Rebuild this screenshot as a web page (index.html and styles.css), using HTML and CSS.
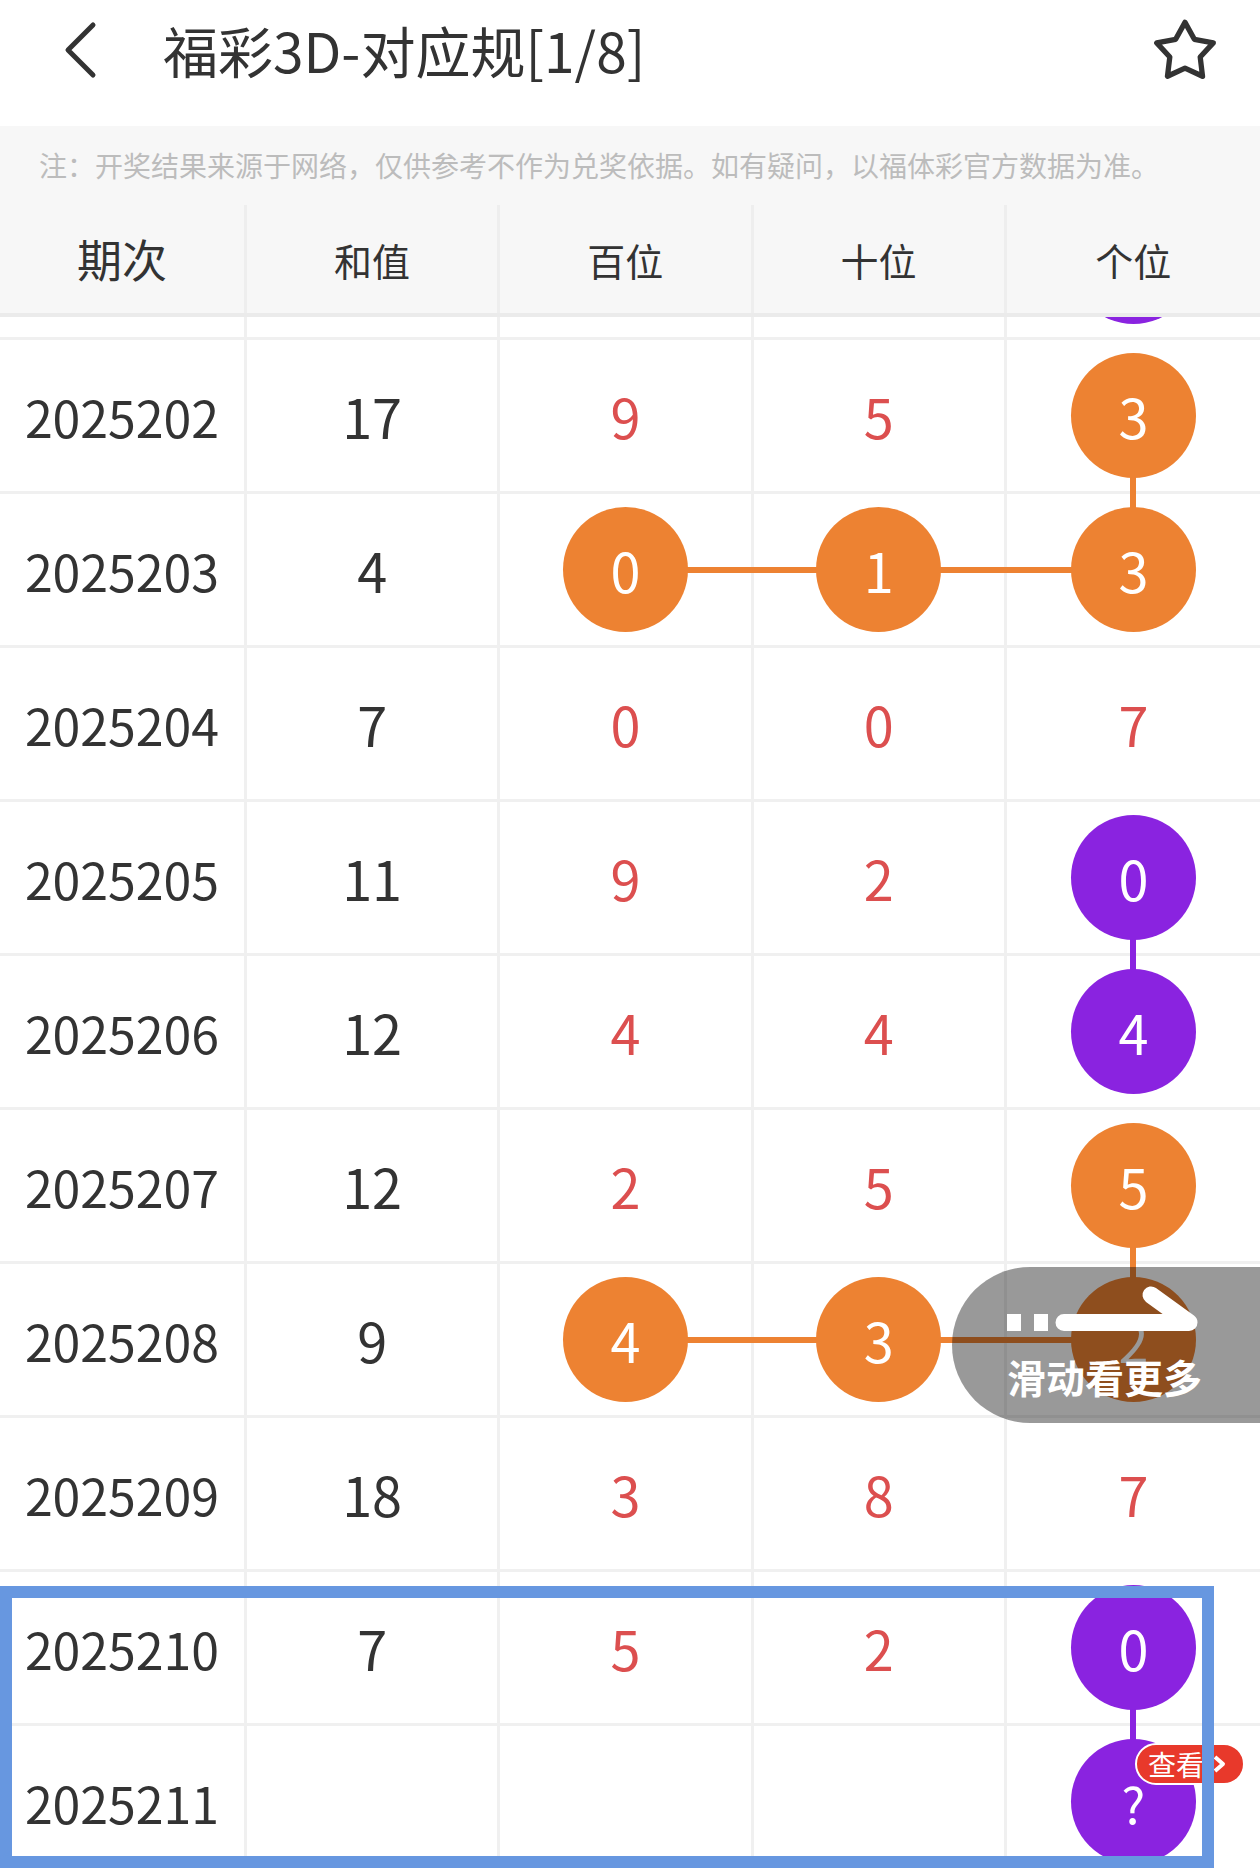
FILE: index.html
```html
<!DOCTYPE html>
<html lang="zh-CN">
<head>
    <meta charset="UTF-8">
    <meta name="viewport" content="width=device-width, initial-scale=1.0">
    <title>福彩3D-对应规</title>
    <link rel="stylesheet" href="styles.css">
</head>
<body>
    <div class="topbar">
        <a href="#" class="back-btn">
            <svg width="40" height="60" viewBox="0 0 40 60"><polyline points="33,5 8,30 33,55" fill="none" stroke="#333" stroke-width="5" stroke-linecap="round" stroke-linejoin="round"/></svg>
        </a>
        <h1 class="title">福彩3D-对应规[1/8]</h1>
        <a href="#" class="fav-btn">
            <svg width="68" height="68" viewBox="0 0 64 64"><polygon points="32,6 40.8,21.9 58.6,25.3 46.3,38.6 48.5,56.7 32,49 15.5,56.7 17.7,38.6 5.4,25.3 23.2,21.9" fill="none" stroke="#333" stroke-width="5" stroke-linejoin="round"/></svg>
        </a>
    </div>

    <div class="notice">注：开奖结果来源于网络，仅供参考不作为兑奖依据。如有疑问，以福体彩官方数据为准。</div>

    <div class="table-head">
        <div class="th th-issue">期次</div>
        <div class="th">和值</div>
        <div class="th">百位</div>
        <div class="th">十位</div>
        <div class="th">个位</div>
    </div>

    <div class="table-body">
        <div class="rows">
            <!-- 上一期已滚动到表头下，只露出底部 -->
            <div class="row">
                <div class="cell issue"></div>
                <div class="cell"></div>
                <div class="cell"></div>
                <div class="cell"></div>
                <div class="cell"><span class="ball purple"></span></div>
            </div>
            <div class="row">
                <div class="cell issue">2025202</div>
                <div class="cell">17</div>
                <div class="cell red">9</div>
                <div class="cell red">5</div>
                <div class="cell"><span class="ball orange">3</span></div>
            </div>
            <div class="row">
                <div class="cell issue">2025203</div>
                <div class="cell">4</div>
                <div class="cell"><span class="ball orange">0</span></div>
                <div class="cell"><i class="line line-left orange"></i><span class="ball orange">1</span></div>
                <div class="cell"><i class="line line-left orange"></i><i class="line line-up orange"></i><span class="ball orange">3</span></div>
            </div>
            <div class="row">
                <div class="cell issue">2025204</div>
                <div class="cell">7</div>
                <div class="cell red">0</div>
                <div class="cell red">0</div>
                <div class="cell red">7</div>
            </div>
            <div class="row">
                <div class="cell issue">2025205</div>
                <div class="cell">11</div>
                <div class="cell red">9</div>
                <div class="cell red">2</div>
                <div class="cell"><span class="ball purple">0</span></div>
            </div>
            <div class="row">
                <div class="cell issue">2025206</div>
                <div class="cell">12</div>
                <div class="cell red">4</div>
                <div class="cell red">4</div>
                <div class="cell"><i class="line line-up purple"></i><span class="ball purple">4</span></div>
            </div>
            <div class="row">
                <div class="cell issue">2025207</div>
                <div class="cell">12</div>
                <div class="cell red">2</div>
                <div class="cell red">5</div>
                <div class="cell"><span class="ball orange">5</span></div>
            </div>
            <div class="row">
                <div class="cell issue">2025208</div>
                <div class="cell">9</div>
                <div class="cell"><span class="ball orange">4</span></div>
                <div class="cell"><i class="line line-left orange"></i><span class="ball orange">3</span></div>
                <div class="cell"><i class="line line-left orange"></i><i class="line line-up orange"></i><span class="ball orange">2</span></div>
            </div>
            <div class="row">
                <div class="cell issue">2025209</div>
                <div class="cell">18</div>
                <div class="cell red">3</div>
                <div class="cell red">8</div>
                <div class="cell red">7</div>
            </div>
            <div class="row">
                <div class="cell issue">2025210</div>
                <div class="cell">7</div>
                <div class="cell red">5</div>
                <div class="cell red">2</div>
                <div class="cell"><span class="ball purple">0</span></div>
            </div>
            <div class="row">
                <div class="cell issue">2025211</div>
                <div class="cell"></div>
                <div class="cell"></div>
                <div class="cell"></div>
                <div class="cell"><i class="line line-up purple"></i><span class="ball purple ask">?</span></div>
            </div>
        </div>
    </div>

    <div class="swipe-tip">
        <svg width="200" height="56" viewBox="0 0 200 56">
            <rect x="8" y="35" width="14" height="17" fill="#fff"/>
            <rect x="35" y="35" width="14" height="17" fill="#fff"/>
            <path d="M65 43.5 H190 L152 16" fill="none" stroke="#fff" stroke-width="17" stroke-linecap="round" stroke-linejoin="round"/>
        </svg>
        <span>滑动看更多</span>
    </div>

    <a href="#" class="view-tag">查看<svg width="14" height="20" viewBox="0 0 14 20"><polyline points="3,3 11,10 3,17" fill="none" stroke="#fff" stroke-width="4" stroke-linejoin="round"/></svg></a>
    <div class="focus-box"></div>
</body>
</html>
```

FILE: styles.css
```css
* {
    margin: 0;
    padding: 0;
    box-sizing: border-box;
}
body {
    width: 1260px;
    height: 1868px;
    overflow: hidden;
    position: relative;
    background: #fff;
    font-family: "Noto Sans CJK SC", "Noto Sans", sans-serif;
    color: #333;
}
a {
    text-decoration: none;
    color: inherit;
}
.topbar {
    height: 126px;
    display: flex;
    align-items: flex-start;
    padding-top: 20px;
}
.back-btn {
    display: flex;
    margin-left: 60px;
    width: 40px;
    height: 60px;
}
.title {
    margin-left: 63px;
    font-size: 55px;
    font-weight: normal;
    line-height: 64px;
    margin-top: -3px;
    color: #333;
    flex: 1;
    white-space: nowrap;
}
.fav-btn {
    display: flex;
    margin-right: 41px;
    margin-top: -4px;
}
.notice {
    height: 79px;
    line-height: 79px;
    background: #f7f7f7;
    padding-left: 39px;
    font-size: 28px;
    color: #bcbcbc;
    white-space: nowrap;
}
.table-head {
    display: grid;
    grid-template-columns: 247px repeat(4, 1fr);
    height: 112px;
    background: #f7f7f7;
    border-bottom: 4px solid #ebebeb;
}
.th {
    display: flex;
    align-items: center;
    justify-content: center;
    font-size: 38px;
    line-height: 1.5;
    color: #333;
    border-right: 3px solid #eeeeee;
}
.th:last-child {
    border-right: none;
}
.th-issue {
    font-size: 45px;
}
.table-body {
    height: 1551px;
    overflow: hidden;
}
.rows {
    margin-top: -131px;
}
.row {
    display: grid;
    grid-template-columns: 247px repeat(4, 1fr);
    height: 154px;
    border-bottom: 3px solid #f0f0f0;
}
.cell {
    position: relative;
    display: flex;
    align-items: center;
    justify-content: center;
    font-size: 54px;
    color: #333;
    border-right: 3px solid #f0f0f0;
}
.cell:last-child {
    border-right: none;
}
.cell.issue {
    font-size: 50px;
}
.cell.red {
    color: #dc4f4f;
}
.ball {
    position: relative;
    z-index: 2;
    width: 125px;
    height: 125px;
    border-radius: 50%;
    display: flex;
    align-items: center;
    justify-content: center;
    color: #fff;
    font-size: 54px;
}
.ball.orange {
    background: #ed8232;
}
.ball.purple {
    background: #8a23e0;
}
.ball.ask {
    font-size: 50px;
}
.line {
    position: absolute;
    z-index: 1;
}
.line.orange {
    background: #ed8232;
}
.line.purple {
    background: #8a23e0;
}
.line-left {
    right: 50%;
    top: calc(50% - 3px);
    width: 254px;
    height: 6px;
}
.line-up {
    left: calc(50% - 3px);
    bottom: 50%;
    width: 6px;
    height: 154px;
}
.swipe-tip {
    position: absolute;
    right: 0;
    top: 1267px;
    width: 308px;
    height: 156px;
    z-index: 5;
    background: rgba(0, 0, 0, 0.4);
    border-radius: 78px 0 0 78px;
    padding-left: 55px;
    padding-top: 12px;
    display: flex;
    flex-direction: column;
    align-items: flex-start;
}
.swipe-tip svg {
    margin-left: -8px;
}
.swipe-tip span {
    color: #fff;
    font-size: 39px;
    font-weight: bold;
    line-height: 50px;
    margin-top: 16px;
}
.view-tag {
    position: absolute;
    left: 1135px;
    top: 1743px;
    width: 110px;
    height: 42px;
    z-index: 6;
    background: #e8392b;
    border: 2px solid #fff;
    border-radius: 21px;
    color: #fff;
    font-size: 28px;
    line-height: 36px;
    padding-left: 11px;
    display: flex;
    align-items: center;
    gap: 8px;
}
.focus-box {
    position: absolute;
    left: 0;
    top: 1586px;
    width: 1214px;
    height: 282px;
    z-index: 7;
    border: 12px solid #6797e0;
}
```
